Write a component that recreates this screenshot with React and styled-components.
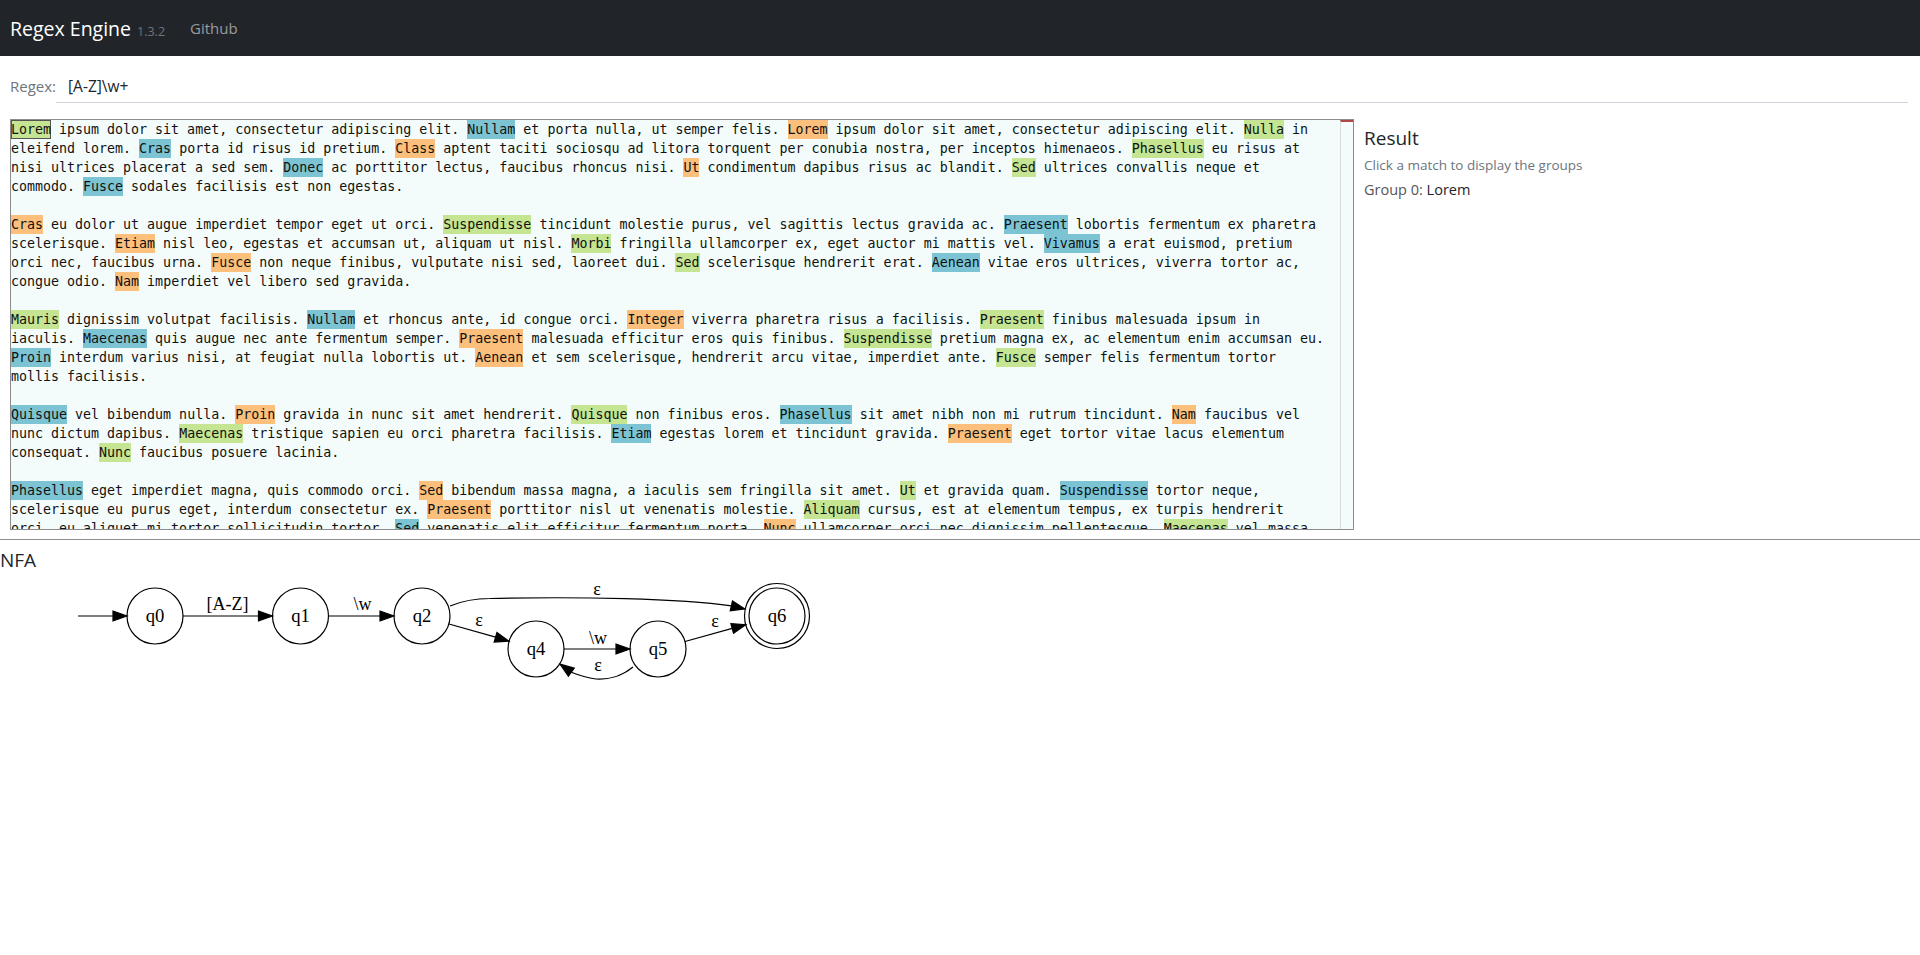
import React from 'react'
import styled, { createGlobalStyle } from 'styled-components'

const GlobalStyle = createGlobalStyle`
  body {
    margin: 0;
    background: #fff;
    font-family: "Open Sans", "Noto Sans", sans-serif;
    color: #212529;
  }
`

const Navbar = styled.nav`
  height: 56px;
  background: #212529;
  display: flex;
  align-items: center;
  padding: 0 10px;
`

const Brand = styled.a`
  color: #fff;
  font-size: 19.5px;
  text-decoration: none;
  display: flex;
  align-items: baseline;
  gap: 6px;
`

const Version = styled.small`
  color: #6c757d;
  font-size: 12.5px;
`

const NavLink = styled.a`
  color: rgba(255, 255, 255, 0.55);
  font-size: 15px;
  margin-left: 25px;
  text-decoration: none;
`

const RegexRow = styled.div`
  display: flex;
  align-items: flex-end;
  margin-top: 15px;
  padding: 0 12px 0 10px;
`

const Label = styled.label`
  color: #6c757d;
  font-size: 15px;
  line-height: 22px;
  padding-bottom: 6px;
`

const Input = styled.input`
  flex: 1;
  border: none;
  border-bottom: 1px solid #ced4da;
  background: transparent;
  font-family: "Open Sans", "Noto Sans", sans-serif;
  font-size: 15.5px;
  line-height: 22px;
  color: #212529;
  padding: 4px 12px 5px 12px;
  outline: none;
`

const Main = styled.div`
  display: flex;
  margin-top: 16px;
  padding-left: 10px;
`

const Editor = styled.div`
  width: 1344px;
  height: 411px;
  box-sizing: border-box;
  border: 1px solid #8c8c8c;
  background: #f3fcfb;
  display: flex;
`

const TextPane = styled.div`
  flex: 1;
  overflow: hidden;
  font-family: "DejaVu Sans Mono", "Liberation Mono", monospace;
  font-size: 13.3px;
  color: #111;
`

const Line = styled.div`
  height: 19px;
  line-height: 19px;
  white-space: pre;
`

const Mark = styled.span`
  display: inline-block;
  height: 19px;
  background: ${p => p.$color};
  box-shadow: ${p => (p.$selected ? 'inset 0 0 0 1px #555' : 'none')};
`

const ScrollCol = styled.div`
  width: 12px;
  border-left: 1px solid #d8dcdc;
  border-top: 2px solid #b04848;
`

const ResultPanel = styled.div`
  padding-left: 10px;
  padding-top: 7px;
`

const ResultTitle = styled.h5`
  margin: 0 0 5px;
  font-size: 19px;
  font-weight: 400;
  line-height: 24px;
`

const Muted = styled.div`
  color: #6c757d;
  font-size: 13.5px;
  line-height: 21px;
`

const GroupLine = styled.div`
  margin-top: 3px;
  font-size: 14.5px;
  line-height: 22px;
  color: #212529;
`

const GroupLabel = styled.span`
  color: #555;
`

const NfaSection = styled.section`
  margin-top: 9px;
  border-top: 1px solid #8c8c8c;
`

const NfaTitle = styled.h5`
  margin: 8px 0 0;
  font-size: 19px;
  font-weight: 400;
  line-height: 24px;
`

const Graph = styled.svg`
  display: block;
`

const paragraphs = [
  [
    'Lorem ipsum dolor sit amet, consectetur adipiscing elit. Nullam et porta nulla, ut semper felis. Lorem ipsum dolor sit amet, consectetur adipiscing elit. Nulla in',
    'eleifend lorem. Cras porta id risus id pretium. Class aptent taciti sociosqu ad litora torquent per conubia nostra, per inceptos himenaeos. Phasellus eu risus at',
    'nisi ultrices placerat a sed sem. Donec ac porttitor lectus, faucibus rhoncus nisi. Ut condimentum dapibus risus ac blandit. Sed ultrices convallis neque et',
    'commodo. Fusce sodales facilisis est non egestas.',
  ],
  [
    'Cras eu dolor ut augue imperdiet tempor eget ut orci. Suspendisse tincidunt molestie purus, vel sagittis lectus gravida ac. Praesent lobortis fermentum ex pharetra',
    'scelerisque. Etiam nisl leo, egestas et accumsan ut, aliquam ut nisl. Morbi fringilla ullamcorper ex, eget auctor mi mattis vel. Vivamus a erat euismod, pretium',
    'orci nec, faucibus urna. Fusce non neque finibus, vulputate nisi sed, laoreet dui. Sed scelerisque hendrerit erat. Aenean vitae eros ultrices, viverra tortor ac,',
    'congue odio. Nam imperdiet vel libero sed gravida.',
  ],
  [
    'Mauris dignissim volutpat facilisis. Nullam et rhoncus ante, id congue orci. Integer viverra pharetra risus a facilisis. Praesent finibus malesuada ipsum in',
    'iaculis. Maecenas quis augue nec ante fermentum semper. Praesent malesuada efficitur eros quis finibus. Suspendisse pretium magna ex, ac elementum enim accumsan eu.',
    'Proin interdum varius nisi, at feugiat nulla lobortis ut. Aenean et sem scelerisque, hendrerit arcu vitae, imperdiet ante. Fusce semper felis fermentum tortor',
    'mollis facilisis.',
  ],
  [
    'Quisque vel bibendum nulla. Proin gravida in nunc sit amet hendrerit. Quisque non finibus eros. Phasellus sit amet nibh non mi rutrum tincidunt. Nam faucibus vel',
    'nunc dictum dapibus. Maecenas tristique sapien eu orci pharetra facilisis. Etiam egestas lorem et tincidunt gravida. Praesent eget tortor vitae lacus elementum',
    'consequat. Nunc faucibus posuere lacinia.',
  ],
  [
    'Phasellus eget imperdiet magna, quis commodo orci. Sed bibendum massa magna, a iaculis sem fringilla sit amet. Ut et gravida quam. Suspendisse tortor neque,',
    'scelerisque eu purus eget, interdum consectetur ex. Praesent porttitor nisl ut venenatis molestie. Aliquam cursus, est at elementum tempus, ex turpis hendrerit',
    'orci, eu aliquet mi tortor sollicitudin tortor. Sed venenatis elit efficitur fermentum porta. Nunc ullamcorper orci nec dignissim pellentesque. Maecenas vel massa',
  ],
]

const colors = ['#c5e593', '#7cc4d4', '#fcc07c']

// split every line into plain text and matches of /[A-Z]\w+/, colouring matches in turn
const buildLines = () => {
  const lines = []
  paragraphs.forEach((p, pi) => {
    if (pi > 0) lines.push('')
    lines.push(...p)
  })
  let count = 0
  return lines.map(text => {
    const parts = []
    const re = /[A-Z]\w+/g
    let last = 0
    let m
    while ((m = re.exec(text))) {
      if (m.index > last) parts.push({ text: text.slice(last, m.index) })
      parts.push({ text: m[0], n: count++ })
      last = m.index + m[0].length
    }
    if (last < text.length) parts.push({ text: text.slice(last) })
    return parts
  })
}

const lines = buildLines()

const Arrow = ({ x, y, dx, dy }) => {
  const len = Math.hypot(dx, dy)
  const ux = dx / len
  const uy = dy / len
  const bx = x - ux * 14
  const by = y - uy * 14
  const pts = [
    [x, y],
    [bx - uy * 5, by + ux * 5],
    [bx + uy * 5, by - ux * 5],
  ]
  return <polygon points={pts.map(p => p.join(',')).join(' ')} fill="#000" stroke="#000" strokeWidth="1.2" />
}

const Node = ({ cx, cy, label, final }) => (
  <g>
    <circle cx={cx} cy={cy} r={28} fill="none" stroke="#000" strokeWidth="1.2" />
    {final && <circle cx={cx} cy={cy} r={32.5} fill="none" stroke="#000" strokeWidth="1.2" />}
    <text x={cx} y={cy + 6} textAnchor="middle" fontFamily="Liberation Serif, serif" fontSize="18.67">
      {label}
    </text>
  </g>
)

const EdgeLabel = ({ x, y, children }) => (
  <text x={x} y={y} textAnchor="middle" fontFamily="Liberation Serif, serif" fontSize="18">
    {children}
  </text>
)

const NfaGraph = () => (
  <Graph width="860" height="125" viewBox="0 572 860 125">
    <g stroke="#000" strokeWidth="1.2" fill="none">
      <path d="M78,616 L113,616" />
      <path d="M183,616 L259,616" />
      <path d="M328.5,616 L380,616" />
      <path d="M449,624 L495.6,637.1" />
      <path d="M564,649 L616,649" />
      <path d="M685,641.5 L732.2,628.4" />
      <path d="M450,606 C462,601 474,598.5 490,598.5 C580,596.5 680,598.5 731.4,605.9" />
      <path d="M633,667 C622,676 608,680 596,679 C588,678 578,675 571.3,672.3" />
    </g>
    <Arrow x={127} y={616} dx={1} dy={0} />
    <Arrow x={272.5} y={616} dx={1} dy={0} />
    <Arrow x={394} y={616} dx={1} dy={0} />
    <Arrow x={509} y={641.2} dx={0.96} dy={0.278} />
    <Arrow x={630} y={649} dx={1} dy={0} />
    <Arrow x={745.7} y={624.7} dx={0.964} dy={-0.267} />
    <Arrow x={745} y={609} dx={0.974} dy={0.225} />
    <Arrow x={560} y={664} dx={-0.81} dy={-0.59} />

    <EdgeLabel x={227.5} y={610}>[A-Z]</EdgeLabel>
    <EdgeLabel x={362.5} y={610}>\w</EdgeLabel>
    <EdgeLabel x={597} y={595}>ε</EdgeLabel>
    <EdgeLabel x={479} y={626}>ε</EdgeLabel>
    <EdgeLabel x={598} y={644}>\w</EdgeLabel>
    <EdgeLabel x={598} y={671}>ε</EdgeLabel>
    <EdgeLabel x={715} y={627}>ε</EdgeLabel>

    <Node cx={155} cy={616} label="q0" />
    <Node cx={300.5} cy={616} label="q1" />
    <Node cx={422} cy={616} label="q2" />
    <Node cx={536} cy={649} label="q4" />
    <Node cx={658} cy={649} label="q5" />
    <Node cx={777} cy={616} label="q6" final />
  </Graph>
)

const App = () => {
  return (
    <>
      <GlobalStyle />
      <Navbar>
        <Brand href="#">
          Regex Engine <Version>1.3.2</Version>
        </Brand>
        <NavLink href="#">Github</NavLink>
      </Navbar>
      <RegexRow>
        <Label>Regex:</Label>
        <Input value={'[A-Z]\\w+'} readOnly />
      </RegexRow>
      <Main>
        <Editor>
          <TextPane>
            {lines.map((parts, i) => (
              <Line key={i}>
                {parts.map((part, j) =>
                  part.n === undefined ? (
                    <React.Fragment key={j}>{part.text}</React.Fragment>
                  ) : (
                    <Mark key={j} $color={colors[part.n % 3]} $selected={part.n === 0}>
                      {part.text}
                    </Mark>
                  )
                )}
              </Line>
            ))}
          </TextPane>
          <ScrollCol />
        </Editor>
        <ResultPanel>
          <ResultTitle>Result</ResultTitle>
          <Muted>Click a match to display the groups</Muted>
          <GroupLine>
            <GroupLabel>Group 0:</GroupLabel> Lorem
          </GroupLine>
        </ResultPanel>
      </Main>
      <NfaSection>
        <NfaTitle>NFA</NfaTitle>
        <NfaGraph />
      </NfaSection>
    </>
  )
}

export default App
